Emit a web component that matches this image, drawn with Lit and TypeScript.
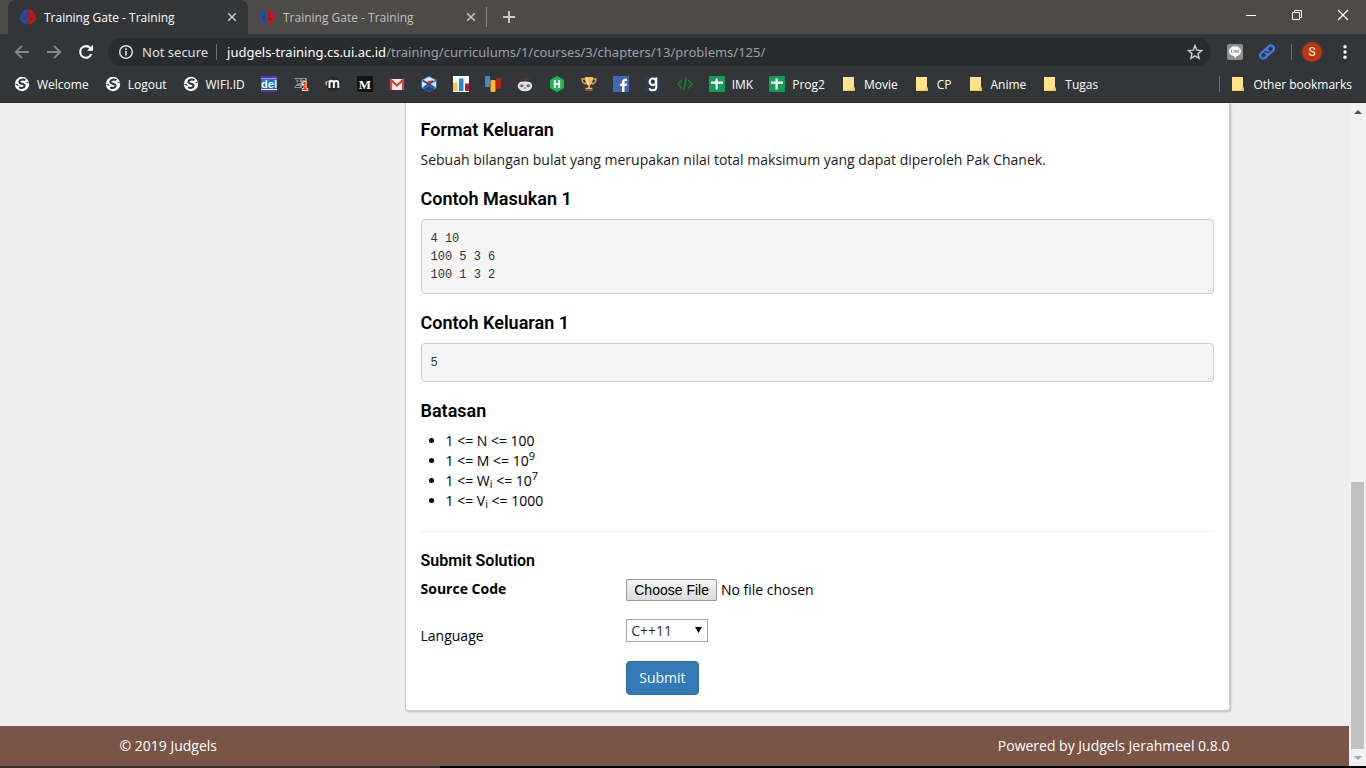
import { LitElement, html, css, svg, nothing } from "lit";
import { customElement, property } from "lit/decorators.js";

const globe = svg`<circle cx="8" cy="8" r="7.2" fill="#fff"/><path d="M11.500 4.200C9.500 3 5.500 3.400 5.300 5.800c-.1 2.400 5.400 1.600 5.300 4-.1 2.200-3.300 2.700-5.600 1.600" fill="none" stroke="#323639" stroke-width="2"/><path d="M1.500 8l3 1.500M12.500 6l2 1" stroke="#323639" stroke-width="1.200"/>`;
const folder = svg`<path d="M2 1h11v11l.8.8V15H2z" fill="#ffe38c"/><path d="M2 14.200h9.500V12l2.300.4V15H2z" fill="#e9c443"/><path d="M12 11.500h1.600v3H12z" fill="#ffd95b" stroke="#e0b93a" stroke-width=".5"/>`;
const sheet = svg`<rect width="16" height="16" rx="1" fill="#0f9d58"/><path d="M2 5.500h12v2.300H2z" fill="#fff"/><path d="M6.500 2.500h2.300v11H6.500z" fill="#fff"/>`;
const gate = svg`<path d="M7.700 .5a7.500 7.500 0 0 0 0 15z" fill="#22509a"/><path d="M8.300 .5a7.500 7.500 0 0 1 0 15z" fill="#c4161c"/><path d="M5.500 4c-.8 3-.8 5 0 8M3 10.500c2-.5 3-2 4.500-4M9.500 4c1 2 1.500 5 1.500 8M9 9.500c1.500 0 3 .5 4 1.500" fill="none" stroke="#262b3a" stroke-opacity=".7" stroke-width=".7"/>`;

const art: Record<string, unknown> = {
  globe, folder, sheet, gate,
  del: svg`<rect width="16" height="16" fill="#f4f8fc"/><path d="M0 0h16v2.500H0z" fill="#5a35a8"/><path d="M0 3h16v10H0z" fill="#1579c4"/><path d="M0 14h16v2H0z" fill="#6b2fa5"/><text x="8" y="12" text-anchor="middle" font-family="Liberation Sans" font-weight="700" font-size="11" fill="#fff">del</text>`,
  sigma: svg`<path d="M1 2h13v3.500h-2.500l-2.500 3V12H1l3.500-5z" fill="#8b8d8f"/><path d="M2.500 3.800h4.500l-2 3h3M3 10.500h4M9 3.500h3" stroke="#2b2e30" stroke-width="1.100" fill="none"/><text x="9" y="14" font-family="Liberation Sans" font-weight="700" font-size="10" fill="#f11" stroke="#fff" stroke-width="1.400" paint-order="stroke">1</text>`,
  moodle: svg`<circle cx="8" cy="8" r="7.500" fill="#2b2b2b"/><path d="M0 6l6-2.500 1 1.200L2 6.500v3H.8z" fill="#aaa"/><path d="M4.500 12V7q0-2 2.200-2t2.200 2v5M8.900 7q0-2 2.200-2t2.200 2v5" fill="none" stroke="#fff" stroke-width="1.900"/>`,
  medium: svg`<rect width="16" height="16" fill="#121212"/><text x="8" y="12.500" text-anchor="middle" font-family="Liberation Serif" font-weight="700" font-size="13" fill="#fff">M</text>`,
  gmail: svg`<path d="M1 3h14v11H1z" fill="#eee"/><path d="M2 14V4l6 5.500L14 4v10" fill="none" stroke="#d5443a" stroke-width="2.200"/>`,
  cube: svg`<path d="M8 0l7.500 4v8L8 16 .5 12V4z" fill="#4e8ed0"/><path d="M8 1l6 3-6 2.500L2 4zM1 5.500L6 8l-5 3.500zM15 5.500L10 8l5 3.500z" fill="#d9e9f8"/><path d="M2.500 13L8 10l5.500 3L8 15.500z" fill="#1d437f"/><path d="M2 4.500l11 7M12 5l-9 6.500" stroke="#203f78" stroke-width="1.300"/><path d="M6.500 5l5.500-.5-3 4.500z" fill="#dc302b"/>`,
  bars: svg`<rect width="16" height="16" fill="#fff"/><path d="M0 6.500h4.500V15H0z" fill="#f8c841"/><path d="M6 2.500h4.500V15H6z" fill="#1a8cd0"/><path d="M12 7.500h4V15h-4z" fill="#b81c2a"/>`,
  pillars: svg`<rect x="0" y="0" width="5" height="11" rx="1.300" fill="#4a83cb"/><rect x="5.500" y="4" width="5" height="12" rx="1.300" fill="#fbba2e"/><rect x="11" y="2" width="5" height="11" rx="1.300" fill="#b02418"/>`,
  panda: svg`<path d="M3.500 5l1-3.500 3.500.7L11.500 1l1 4z" fill="#5b3527"/><ellipse cx="8" cy="10" rx="7.300" ry="5.300" fill="#dfe3e5"/><path d="M1 4.800h14" stroke="#4a2b22" stroke-width="1.400"/><ellipse cx="4.800" cy="9.800" rx="1.900" ry="1.500" fill="#6b737a"/><ellipse cx="11.200" cy="9.800" rx="1.900" ry="1.500" fill="#6b737a"/><circle cx="8" cy="12" r=".8" fill="#444"/>`,
  hacker: svg`<path d="M8 0.600l6.300 3.600v7.600L8 15.400l-6.300-3.600V4.200z" fill="#1fb854" stroke="#1fb854" stroke-width="1.200" stroke-linejoin="round"/><path d="M5.800 4v8M10.200 4v8M5.500 8h5" stroke="#fff" stroke-width="1.900"/>`,
  trophy: svg`<path d="M4 1h8c0 5-1 7.500-3.200 8.500v2.300h2.500V15H4.700v-3.200h2.500V9.500C5 8.500 4 6 4 1z" fill="#f3bd62"/><path d="M4 3H1c0 3 1.500 4.500 4 5M12 3h3c0 3-1.500 4.500-4 5" fill="none" stroke="#e0a550" stroke-width="1.400"/><path d="M6 2c0 3 .5 5 1.500 6" stroke="#fff0c4" stroke-width="1.200" fill="none"/><path d="M5 13h6v2H5z" fill="#8f5a2a"/>`,
  facebook: svg`<rect width="16" height="16" fill="#4267b2"/><path d="M9 16V10H7V7.500h2V6c0-2.200 1.300-3.300 3.300-3.300h1.700V5h-1.300c-1 0-1.200.5-1.200 1.200v1.300H14l-.4 2.500h-2.100v6z" fill="#fff"/>`,
  nine: svg`<rect width="16" height="16" fill="#2b3c52"/><ellipse cx="7.800" cy="5.800" rx="3.200" ry="3.300" fill="none" stroke="#fff" stroke-width="2.100"/><path d="M11.300 1.500v9.500c0 2.600-1.500 3.300-3.500 3.300-1.600 0-2.900-.5-3.400-1.900" fill="none" stroke="#fff" stroke-width="2"/>`,
  code: svg`<path d="M4.800 4L1 8.200 4.800 12.500M11.200 4L15 8.200l-3.800 4.300M9.500 1.500l-3 13" fill="none" stroke="#15802d" stroke-width="1.700"/>`,
  back: svg`<path d="M15 8H2M8 1.800L1.800 8 8 14.200" fill="none" stroke="#85888b" stroke-width="1.900"/>`,
  forward: svg`<path d="M1 8h13M8 1.800L14.200 8 8 14.200" fill="none" stroke="#85888b" stroke-width="1.900"/>`,
  reload: svg`<path d="M13.300 10.200A5.800 5.800 0 1 1 12.300 4" fill="none" stroke="#fff" stroke-width="2.100"/><path d="M15 .8v6H9z" fill="#fff"/>`,
  info: svg`<circle cx="8" cy="8" r="6.300" fill="none" stroke="#dfe1e3" stroke-width="1.500"/><path d="M8 7v4.500M8 4.300V6" stroke="#dfe1e3" stroke-width="1.600"/>`,
  star: svg`<path d="M8 1.600l1.800 4.500 4.900.4-3.700 3.100 1.100 4.700L8 11.800l-4.100 2.500L5 9.600 1.300 6.500l4.900-.4z" fill="none" stroke="#cfd1d3" stroke-width="1.400"/>`,
  line: svg`<rect width="16" height="16" rx="2" fill="#8f8f8f"/><ellipse cx="8" cy="7.200" rx="6" ry="4.900" fill="#fff"/><path d="M6 11h5l-3 3.300z" fill="#fff"/><path d="M4.500 5.800v2.700h1.300M7 5.800v2.700M8.300 8.500V6l1.400 2.500V6M12.300 6h-1.300v2.400h1.300M11 7.200h1" stroke="#777" stroke-width=".7" fill="none"/>`,
  link: svg`<g fill="none" stroke="#3e82f1" stroke-width="2.100" transform="rotate(-42 8 8)"><path d="M8.500 11H2.800a3 3 0 0 1 0-6h4a3 3 0 0 1 2.800 4"/><path d="M7.500 5h5.700a3 3 0 0 1 0 6h-4a3 3 0 0 1-2.800-4"/></g>`,
  dots: svg`<circle cx="8" cy="2.700" r="1.700" fill="#fff"/><circle cx="8" cy="8" r="1.700" fill="#fff"/><circle cx="8" cy="13.300" r="1.700" fill="#fff"/>`,
  close: svg`<path d="M4.200 4.200l7.600 7.600M11.800 4.200l-7.600 7.600" stroke="#c3c4c5" stroke-width="1.600"/>`,
  plus: svg`<path d="M8 2v12M2 8h12" stroke="#cbcbca" stroke-width="1.900"/>`,
  minimize: svg`<path d="M3 8.500h10" stroke="#fff"/>`,
  restore: svg`<path d="M3.500 5.500h7v7h-7zM5.500 5V3.500h7v7H11" fill="none" stroke="#fff"/>`,
  exit: svg`<path d="M3 3l10 10M13 3L3 13" stroke="#fff" stroke-width="1.200"/>`,
  up: svg`<path d="M4 10l4-4 4 4z" fill="#505050"/>`,
  down: svg`<path d="M4 6l4 4 4-4z" fill="#a3a3a3"/>`,
};

const icon = (name: string) =>
  html`<svg class="icon" viewBox="0 0 16 16" width="16" height="16" aria-hidden="true">${art[name]}</svg>`;

@customElement("browser-chrome")
class BrowserChrome extends LitElement {
  static styles = css`
    :host { display: block; flex: none; background: #323639; border-bottom: 1px solid #26292b; font-family: "Open Sans", sans-serif; color: #fff; }
    .icon { display: block; flex: none; }
    button { display: grid; place-items: center; border: 0; padding: 0; background: none; font: inherit; color: inherit; }
    a { color: inherit; text-decoration: none; }
    .strip { display: flex; height: 34px; padding-left: 8px; background: #4d4a47; font-size: 12px; }
    .tab { display: flex; align-items: center; gap: 8px; width: 240px; padding: 0 8px 0 12px; box-sizing: border-box; color: #bfc0c1; }
    .tab + .tab { margin-left: -1px; }
    .tab.active { background: #323639; border-radius: 8px 8px 0 0; color: #fff; }
    .title { flex: 1; white-space: nowrap; }
    .add { align-self: center; border-left: 1px solid #8b8987; height: 20px; padding-left: 14px; margin-left: -1px; }
    .window { display: flex; margin-left: auto; height: 30px; }
    .window button { width: 46px; }
    .bar { display: flex; align-items: center; height: 36px; padding: 0 13px 0 14px; }
    .nav { display: flex; gap: 16px; margin-right: 14px; }
    .omnibox { display: flex; align-items: center; flex: 1; height: 28px; padding: 0 8px 0 10px; border-radius: 14px; background: #282c2f; font-family: "Noto Sans", sans-serif; font-size: 13px; line-height: 18px; }
    .secure { padding: 0 8px; line-height: 16px; border-right: 1px solid #6d7073; margin-right: 10px; color: #dfe1e3; white-space: nowrap; }
    .address { flex: 1; min-width: 0; white-space: nowrap; }
    .path { color: #9aa0a6; }
    .tools { display: flex; align-items: center; gap: 16px; margin-left: 16px; }
    .divider { width: 1px; height: 16px; background: #6d7073; }
    .avatar { width: 20px; height: 20px; border-radius: 50%; background: #bf360c; font: 12px "Roboto", sans-serif; margin: 0 -1px 0 -6px; }
    .marks { display: flex; align-items: center; height: 28px; padding: 0 6px 4px; font-size: 12px; }
    .mark { display: flex; align-items: center; gap: 7px; padding: 0 8px; white-space: nowrap; }
    .marks .divider { margin-left: auto; margin-right: 2px; }
  `;

  bookmarks: [string, string][] = [
    ["globe", "Welcome"], ["globe", "Logout"], ["globe", "WIFI.ID"],
    ["del", ""], ["sigma", ""], ["moodle", ""], ["medium", ""], ["gmail", ""], ["cube", ""], ["bars", ""], ["pillars", ""],
    ["panda", ""], ["hacker", ""], ["trophy", ""], ["facebook", ""], ["nine", ""], ["code", ""],
    ["sheet", "IMK"], ["sheet", "Prog2"], ["folder", "Movie"], ["folder", "CP"], ["folder", "Anime"], ["folder", "Tugas"],
  ];

  mark([name, label]: [string, string]) {
    return html`<a class="mark" href="#" aria-label=${label || name}>${icon(name)}${label ? html`<span>${label}</span>` : nothing}</a>`;
  }

  render() {
    return html`
      <div class="strip">
        ${[true, false].map((active) => html`
          <div class="tab ${active ? "active" : ""}">
            ${icon("gate")}<span class="title">Training Gate - Training</span>
            <button aria-label="Close tab">${icon("close")}</button>
          </div>`)}
        <button class="add" aria-label="New tab">${icon("plus")}</button>
        <div class="window">
          <button aria-label="Minimize">${icon("minimize")}</button>
          <button aria-label="Restore">${icon("restore")}</button>
          <button aria-label="Close">${icon("exit")}</button>
        </div>
      </div>
      <div class="bar">
        <div class="nav">
          <button aria-label="Back">${icon("back")}</button>
          <button aria-label="Forward">${icon("forward")}</button>
          <button aria-label="Reload">${icon("reload")}</button>
        </div>
        <div class="omnibox">
          ${icon("info")}<span class="secure">Not secure</span>
          <div class="address" role="textbox" aria-label="Address">judgels-training.cs.ui.ac.id<span class="path">/training/curriculums/1/courses/3/chapters/13/problems/125/</span></div>
          <button aria-label="Bookmark this page">${icon("star")}</button>
        </div>
        <div class="tools">
          <button aria-label="Line">${icon("line")}</button>
          <button aria-label="Link">${icon("link")}</button>
          <span class="divider"></span>
          <button class="avatar" aria-label="Profile">S</button>
          <button aria-label="Menu">${icon("dots")}</button>
        </div>
      </div>
      <nav class="marks">
        ${this.bookmarks.map((b) => this.mark(b))}
        <span class="divider"></span>
        ${this.mark(["folder", "Other bookmarks"])}
      </nav>`;
  }
}

@customElement("problem-page")
class ProblemPage extends LitElement {
  static styles = css`
    :host { display: flex; flex-direction: column; flex: 1; min-width: 0; overflow: hidden; background: #eee; font: 14px/20px "Open Sans", sans-serif; color: #000; }
    .container { width: 100%; max-width: 1140px; margin: 0 auto; padding: 0 15px; box-sizing: border-box; }
    .row { display: grid; grid-template-columns: repeat(12, 1fr); column-gap: 30px; }
    .card { grid-column: 4 / -1; padding: 17px 15px 15px; background: #fff; border: 1px solid #ccc; border-top: 0; border-radius: 0 0 3px 3px; box-shadow: 1px 1px 2px #bbb; }
    h4, h5 { font-family: "Roboto", sans-serif; line-height: 20px; }
    h4 { margin: 19px 0 10px; font-size: 18px; font-weight: 600; }
    h4:first-child { margin-top: 0; }
    h5 { margin: 0 0 8px; font-size: 16px; font-weight: 600; }
    p { margin: 0; color: #1a1a1a; }
    pre { margin: 0; padding: 10px 9px 9px; border: 1px solid #ccc; border-radius: 4px; background: #f5f5f5; color: #333; font: 12px/18px "Liberation Mono", monospace; }
    ul { margin: 0; padding-left: 25px; }
    sub, sup { font-size: 11px; line-height: 0; }
    sub { vertical-align: -2px; }
    sup { vertical-align: 6px; }
    hr { margin: 20px 0 19px; border: 0; border-top: 1px solid #eee; }
    .group { margin-bottom: 15px; }
    .label { grid-column: 1 / 4; }
    .field { grid-column: 4 / -1; }
    .strong { font-weight: 700; }
    .file { display: block; font: inherit; height: 25px; line-height: 22px; width: 100%; }
    .file::file-selector-button { margin: 0 4px 0 0; height: 22px; padding: 0 7px; border: 1px solid #999; border-radius: 1px; background: linear-gradient(#f4f4f4, #dcdcdc); font: 14px/20px "Liberation Sans", sans-serif; color: #000; }
    .pick { position: relative; display: block; width: 82px; }
    .pick select { display: block; width: 100%; height: 23px; padding: 0 4px; appearance: none; border: 1px solid #a6a6a6; border-radius: 0; background: #fff; font: inherit; color: #333; }
    .arrow { position: absolute; right: 6px; top: 8px; pointer-events: none; }
    .language .label { padding-top: 7px; }
    .submit { height: 34px; padding: 0 12px; border: 1px solid #2e6da4; border-radius: 4px; background: #337ab7; color: #fff; font: inherit; display: block; }
    footer { margin-top: 15px; height: 40px; flex: none; background: #795548; color: #fff; line-height: 40px; }
    .ends { display: flex; justify-content: space-between; }
  `;

  render() {
    return html`
      <div class="container">
        <div class="row">
          <main class="card">
            <h4>Format Keluaran</h4>
            <p>Sebuah bilangan bulat yang merupakan nilai total maksimum yang dapat diperoleh Pak Chanek.</p>
            <h4>Contoh Masukan 1</h4>
            <pre>${"4 10\n100 5 3 6\n100 1 3 2"}</pre>
            <h4>Contoh Keluaran 1</h4>
            <pre>5</pre>
            <h4>Batasan</h4>
            <ul>
              <li>1 &lt;= N &lt;= 100</li>
              <li>1 &lt;= M &lt;= 10<sup>9</sup></li>
              <li>1 &lt;= W<sub>i</sub> &lt;= 10<sup>7</sup></li>
              <li>1 &lt;= V<sub>i</sub> &lt;= 1000</li>
            </ul>
            <hr />
            <form @submit=${(e: Event) => e.preventDefault()}>
              <h5>Submit Solution</h5>
              <div class="row group">
                <label class="label strong" for="source">Source Code</label>
                <div class="field"><input class="file" id="source" type="file" /></div>
              </div>
              <div class="row group language">
                <label class="label" for="language">Language</label>
                <div class="field">
                  <span class="pick">
                    <select id="language"><option>C++11</option></select>
                    <svg class="arrow" width="7" height="6" viewBox="0 0 7 6" aria-hidden="true"><path d="M0 0h7L3.500 6z" fill="#000" /></svg>
                  </span>
                </div>
              </div>
              <div class="row"><div class="field"><button class="submit">Submit</button></div></div>
            </form>
          </main>
        </div>
      </div>
      <footer><div class="container ends"><span>© 2019 Judgels</span><span>Powered by Judgels Jerahmeel 0.8.0</span></div></footer>`;
  }
}

@customElement("scroll-rail")
class ScrollRail extends LitElement {
  @property({ type: Number }) start = 0.575;
  @property({ type: Number }) size = 0.425;
  static styles = css`
    :host { display: flex; flex-direction: column; flex: none; width: 17px; background: #f1f1f1; }
    button { display: grid; place-items: center; height: 17px; border: 0; padding: 0; background: none; }
    .track { display: flex; flex-direction: column; flex: 1; padding: 0 2px; }
    .thumb { background: #c1c1c1; }
  `;
  render() {
    return html`
      <button aria-label="Scroll up">${icon("up")}</button>
      <div class="track">
        <div style="flex: ${this.start}"></div>
        <div class="thumb" style="flex: ${this.size}"></div>
      </div>
      <button aria-label="Scroll down">${icon("down")}</button>`;
  }
}

@customElement("app-root")
class AppRoot extends LitElement {
  static styles = css`
    :host { display: flex; flex-direction: column; height: 100vh; overflow: hidden; }
    .view { display: flex; flex: 1; min-height: 0; }
    .edge { height: 2px; flex: none; background: linear-gradient(90deg, #333 440px, #000 440px); }
  `;
  render() {
    return html`
      <browser-chrome></browser-chrome>
      <div class="view"><problem-page></problem-page><scroll-rail></scroll-rail></div>
      <div class="edge"></div>`;
  }
}
